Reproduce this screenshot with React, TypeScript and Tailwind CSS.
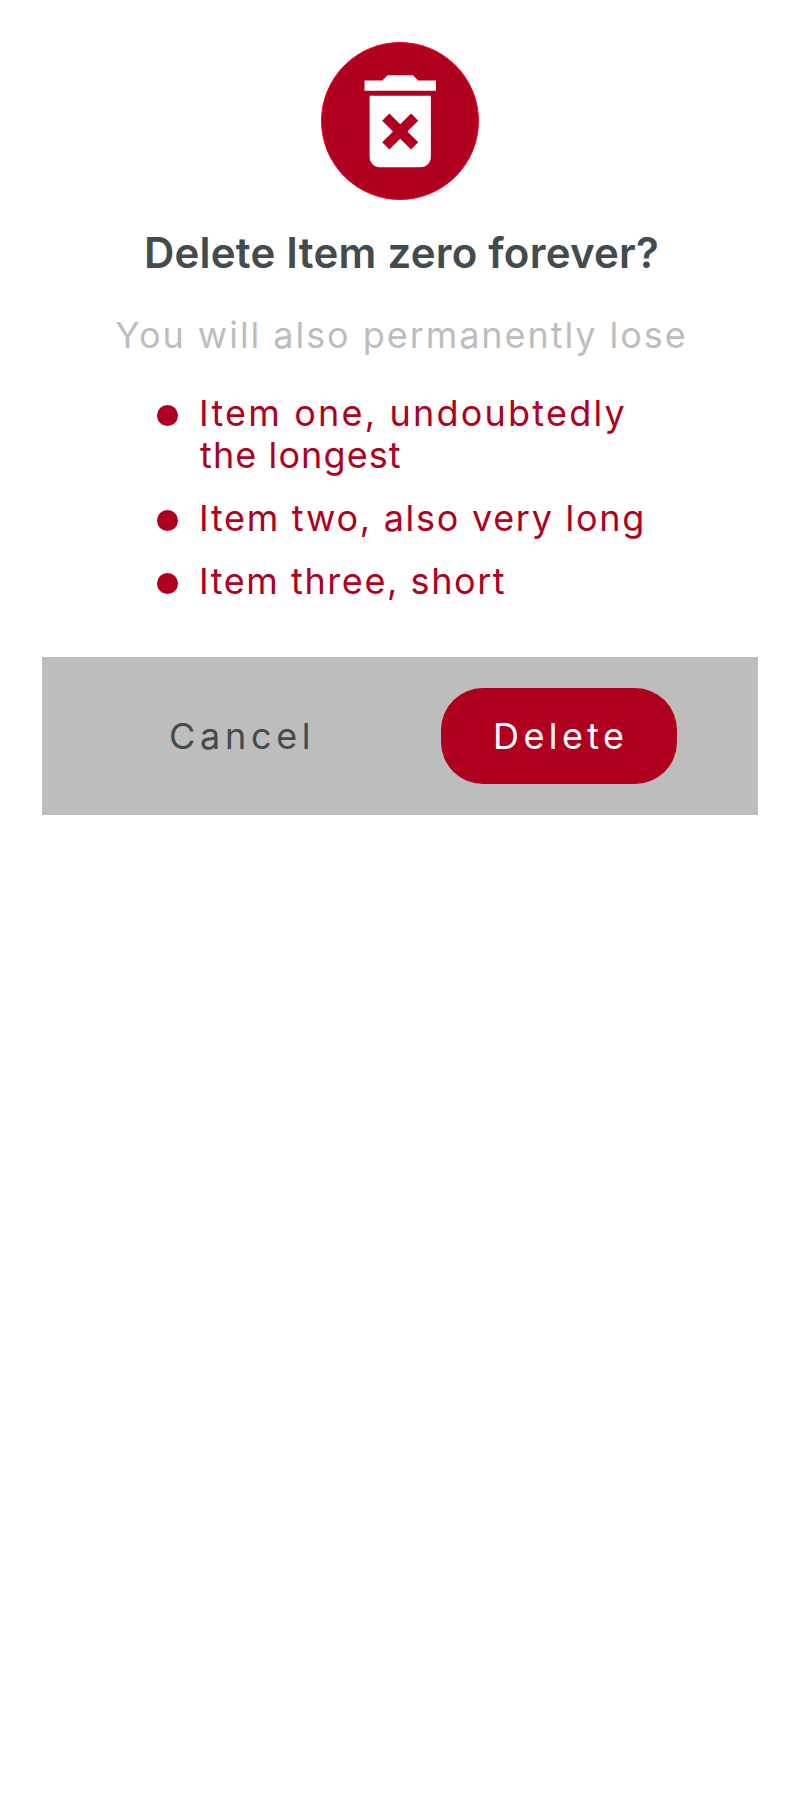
type Line = { text: string; className: string };

const items: Line[][] = [
  [
    { text: "Item one, undoubtedly", className: "tracking-[2.2px]" },
    { text: "the longest", className: "ml-px tracking-[1.1px]" },
  ],
  [{ text: "Item two, also very long", className: "tracking-[1.72px]" }],
  [{ text: "Item three, short", className: "tracking-[1.57px]" }],
];

function DeleteBadge() {
  return (
    <div className="flex size-[158px] items-center justify-center rounded-full border border-[#f00020] bg-[#b00020]">
      <svg viewBox="0 0 24 24" className="size-[122.5px] shrink-0 fill-white" aria-hidden="true">
        <path d="M6 19c0 1.1.9 2 2 2h8c1.1 0 2-.9 2-2V7H6v12zm2.46-7.12l1.41-1.41L12 12.59l2.12-2.12 1.41 1.41L13.41 14l2.12 2.12-1.41 1.41L12 15.41l-2.12 2.12-1.41-1.41L10.59 14l-2.13-2.12zM15.5 4l-1-1h-5l-1 1H5v2h14V4z" />
      </svg>
    </div>
  );
}

export default function App() {
  return (
    <main className="min-h-[1794px] w-[800px] bg-white px-[42px] pt-[42px] font-['Inter',sans-serif] text-[36px] leading-[42px] whitespace-nowrap">
      <div className="flex flex-col items-center">
        <DeleteBadge />
        <h1 className="mt-7 ml-[3px] h-[50px] text-[42px] leading-[50px] font-semibold tracking-[0.23px] text-[#424b4d]">
          Delete Item zero forever?
        </h1>
        <p className="mt-9 ml-[3px] tracking-[1.95px] text-[#bdbdbd]">You will also permanently lose</p>
      </div>

      <ul className="mt-9 flex flex-col gap-[21px] pl-[115px] text-[#b00020]">
        {items.map((lines) => (
          <li key={lines[0].text} className="flex gap-[21px]">
            <span className="mt-[13px] size-[21px] shrink-0 rounded-full bg-[#b00020]" />
            <div className="flex flex-col">
              {lines.map((line) => (
                <span key={line.text} className={line.className}>
                  {line.text}
                </span>
              ))}
            </div>
          </li>
        ))}
      </ul>

      <div className="mt-[55px] flex h-[158px] items-center bg-[#bdbdbd] pl-[75px]">
        <button className="h-24 w-[248px] pl-[52px] text-left tracking-[4.7px] text-[#424b4d]">Cancel</button>
        <button className="ml-[76px] h-24 w-[236px] rounded-[42px] bg-[#b00020] pl-[52px] text-left tracking-[4.4px] text-white">
          Delete
        </button>
      </div>
    </main>
  );
}
